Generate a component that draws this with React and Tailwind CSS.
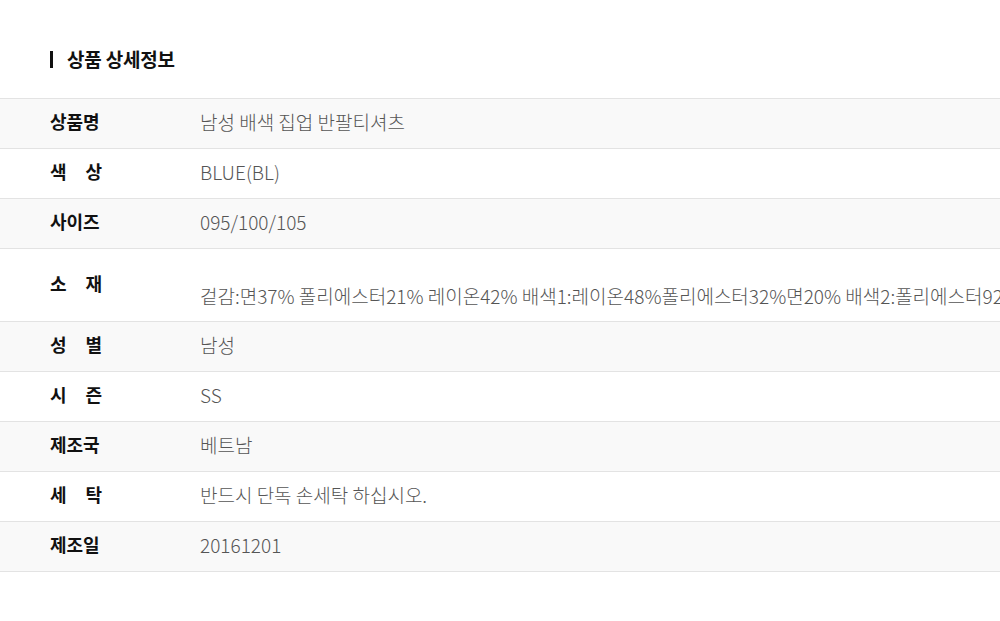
import React from 'react';

const rows = [
  { label: ['상품명'], value: '남성 배색 집업 반팔티셔츠' },
  { label: ['색', '상'], value: 'BLUE(BL)' },
  { label: ['사이즈'], value: '095/100/105' },
  {
    label: ['소', '재'],
    value:
      '겉감:면37% 폴리에스터21% 레이온42% 배색1:레이온48%폴리에스터32%면20% 배색2:폴리에스터92% 폴리우레탄8%',
    tall: true,
  },
  { label: ['성', '별'], value: '남성' },
  { label: ['시', '즌'], value: 'SS' },
  { label: ['제조국'], value: '베트남' },
  { label: ['세', '탁'], value: '반드시 단독 손세탁 하십시오.' },
  { label: ['제조일'], value: '20161201' },
];

function Label({ parts }) {
  if (parts.length === 1) {
    return <span>{parts[0]}</span>;
  }
  return (
    <span className="flex w-[52px] justify-between">
      <span>{parts[0]}</span>
      <span>{parts[1]}</span>
    </span>
  );
}

export default function App() {
  return (
    <div
      className="w-[1000px] h-[621px] overflow-hidden bg-white"
      style={{ fontFamily: '"Noto Sans CJK KR", "Noto Sans", sans-serif' }}
    >
      <div className="pt-[46px] pb-[26px] pl-[50px] flex items-center gap-[14px]">
        <span className="w-[3px] h-[17px] bg-[#111]"></span>
        <h2 className="text-[19px] font-bold text-[#111] leading-[26px] tracking-[-0.2px]">상품 상세정보</h2>
      </div>

      <div className="border-t border-[#e3e3e3]">
        {rows.map((row, i) => (
          <div
            key={i}
            className={`flex border-b border-[#e3e3e3] ${
              i % 2 === 0 ? 'bg-[#f9f9f9]' : 'bg-white'
            } ${row.tall ? 'h-[73px]' : 'h-[50px]'}`}
          >
            <div className="w-[200px] shrink-0 pl-[50px] pb-[4px] flex items-center text-[18px] font-bold text-[#111]">
              <Label parts={row.label} />
            </div>
            <div
              className={`flex-1 whitespace-nowrap text-[19px] font-light text-[#555] flex ${
                row.tall ? 'items-start pt-[34px]' : 'items-center pb-[4px]'
              }`}
            >
              <span className="leading-[26px]">{row.value}</span>
            </div>
          </div>
        ))}
      </div>
    </div>
  );
}
